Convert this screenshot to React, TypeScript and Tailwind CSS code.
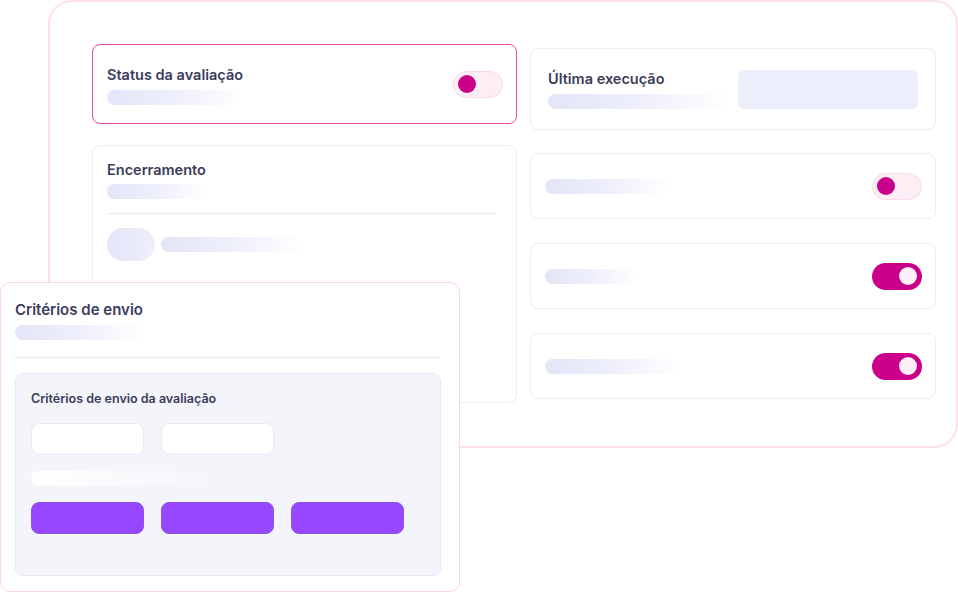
import React from 'react';

const Bar: React.FC<{ w: string; light?: boolean }> = ({ w, light }) => (
  <div
    className={`h-[15px] rounded-full ${w} ${
      light
        ? 'bg-gradient-to-r from-white to-transparent'
        : 'bg-gradient-to-r from-[#e3e5f8] via-[#eeeffb] to-white/0'
    }`}
  />
);

const Toggle: React.FC<{ on?: boolean }> = ({ on }) =>
  on ? (
    <div className="w-[50px] h-[27px] rounded-full bg-[#cc0088] flex items-center justify-end pr-[5px]">
      <div className="w-[18px] h-[18px] rounded-full bg-[#fdeef8]" />
    </div>
  ) : (
    <div className="w-[50px] h-[27px] rounded-full bg-[#fdeef6] border border-[#fbd8ea] flex items-center pl-[4px]">
      <div className="w-[18px] h-[18px] rounded-full bg-[#c8008a]" />
    </div>
  );

const App: React.FC = () => {
  return (
    <div
      className="relative w-[958px] h-[592px] bg-white overflow-hidden"
      style={{ fontFamily: 'Inter, "Open Sans", sans-serif' }}
    >
      {/* main panel */}
      <div className="ml-[48px] w-[910px] h-[448px] border-2 border-[#fde0ea] rounded-[24px] bg-white pl-[42px] pt-[42px] pr-[19px] flex gap-[13px]">
        {/* left column */}
        <div className="w-[425px] flex flex-col gap-[21px]">
          <div className="h-[80px] rounded-[8px] border border-[#e5489e] pl-[14px] pr-[13px] flex items-center justify-between">
            <div className="flex flex-col gap-[6px] pt-[2px]">
              <span className="text-[14.5px] font-semibold text-[#3c3c5a] leading-[18px]">Status da avaliação</span>
              <Bar w="w-[136px]" />
            </div>
            <Toggle />
          </div>

          <div className="h-[258px] rounded-[8px] border border-[#ebebfa] px-[14px] pt-[15px]">
            <span className="block text-[14.5px] font-semibold text-[#3c3c5a] leading-[18px]">Encerramento</span>
            <div className="mt-[5px]">
              <Bar w="w-[98px]" />
            </div>
            <div className="mt-[14px] h-px w-[389px] bg-[#e9e9f4]" />
            <div className="mt-[14px] flex items-center gap-[6px]">
              <div className="w-[48px] h-[33px] rounded-full bg-gradient-to-r from-[#e3e5f8] to-[#eeeffb]" />
              <Bar w="w-[142px]" />
            </div>
          </div>
        </div>

        {/* right column */}
        <div className="w-[406px] flex flex-col pt-[4px]">
          <div className="h-[82px] rounded-[8px] border border-[#ebebfa] pl-[17px] pr-[17px] flex items-center justify-between">
            <div className="flex flex-col gap-[6px]">
              <span className="text-[14.5px] font-semibold text-[#3c3c5a] leading-[18px]">Última execução</span>
              <Bar w="w-[182px]" />
            </div>
            <div className="w-[180px] h-[39px] rounded-[6px] bg-[#eceefb]" />
          </div>

          <div className="mt-[23px] h-[66px] rounded-[8px] border border-[#ebebfa] pl-[14px] pr-[13px] flex items-center justify-between">
            <Bar w="w-[125px]" />
            <Toggle />
          </div>

          <div className="mt-[24px] h-[66px] rounded-[8px] border border-[#ebebfa] pl-[14px] pr-[13px] flex items-center justify-between">
            <Bar w="w-[91px]" />
            <Toggle on />
          </div>

          <div className="mt-[24px] h-[66px] rounded-[8px] border border-[#ebebfa] pl-[14px] pr-[13px] flex items-center justify-between">
            <Bar w="w-[135px]" />
            <Toggle on />
          </div>
        </div>
      </div>

      {/* overlaid card */}
      <div className="absolute left-0 top-[282px] w-[460px] h-[310px] rounded-[10px] border border-[#fbd5e2] bg-white px-[14px] pt-[17px]">
        <span className="block text-[15px] font-semibold text-[#3c3c5a] leading-[20px]">Critérios de envio</span>
        <div className="mt-[5px]">
          <Bar w="w-[128px]" />
        </div>
        <div className="mt-[17px] h-px w-[425px] bg-[#e9e9f4]" />
        <div className="mt-[15px] w-[426px] h-[203px] rounded-[8px] bg-[#f4f4fb] border border-[#e7e8f8] px-[15px] pt-[16px]">
          <span className="block text-[12.5px] font-semibold text-[#3c3c5a] leading-[18px]">Critérios de envio da avaliação</span>
          <div className="mt-[15px] flex gap-[17px]">
            <div className="w-[113px] h-[32px] rounded-[8px] bg-white border border-[#e8e8f8]" />
            <div className="w-[113px] h-[32px] rounded-[8px] bg-white border border-[#e8e8f8]" />
          </div>
          <div className="mt-[16px]">
            <Bar w="w-[190px]" light />
          </div>
          <div className="mt-[16px] flex gap-[17px]">
            <div className="w-[113px] h-[32px] rounded-[8px] bg-[#9747ff] border border-[#8a55e6]" />
            <div className="w-[113px] h-[32px] rounded-[8px] bg-[#9747ff] border border-[#8a55e6]" />
            <div className="w-[113px] h-[32px] rounded-[8px] bg-[#9747ff] border border-[#8a55e6]" />
          </div>
        </div>
      </div>
    </div>
  );
};

export default App;
